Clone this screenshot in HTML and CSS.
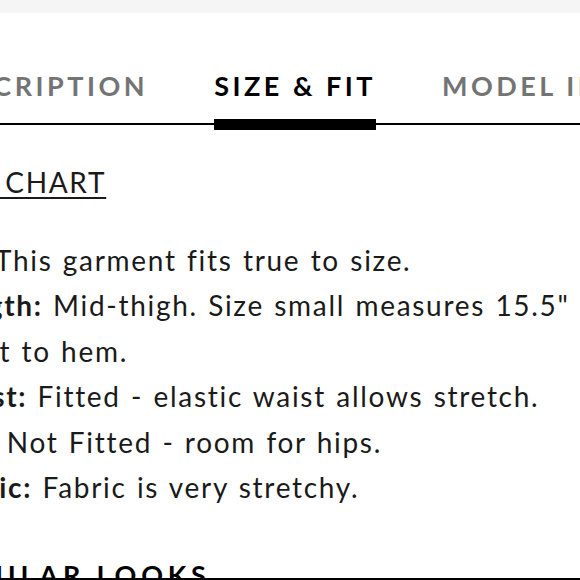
FILE: index.html
```html
<!DOCTYPE html>
<html lang="en">
<head>
<meta charset="utf-8">
<title>Size &amp; Fit</title>
<link rel="stylesheet" href="styles.css">
</head>
<body>
<div class="topbar"></div>
<nav class="tabs">
  <a class="tab">DESCRIPTION</a>
  <a class="tab active">SIZE &amp; FIT</a>
  <a class="tab">MODEL INFO</a>
</nav>
<section class="content">
  <a class="chart-link">SIZE CHART</a>
  <ul class="fit-list">
    <li><b>Fit:</b> This garment fits true to size.</li>
    <li><b>Length:</b> Mid-thigh. Size small measures 15.5" from waist to hem.</li>
    <li><b>Waist:</b> Fitted - elastic waist allows stretch.</li>
    <li><b>Hip:</b> Not Fitted - room for hips.</li>
    <li><b>Fabric:</b> Fabric is very stretchy.</li>
  </ul>
  <h2 class="similar">SIMILAR LOOKS</h2>
</section>
</body>
</html>
```
FILE: styles.css
```css
html, body {
  margin: 0;
  padding: 0;
  overflow: hidden;
  background: #fff;
}
body {
  font-family: Lato, "Liberation Sans", sans-serif;
  font-variant-ligatures: none;
  color: #1a1a1a;
  width: 580px;
  height: 580px;
}
.topbar {
  height: 13px;
  background: #f5f5f5;
}
.tabs {
  display: flex;
  align-items: flex-start;
  gap: 66px;
  padding-top: 58px;
  border-bottom: 2px solid #000;
  margin-left: -68px;
  width: 760px;
}
.tab {
  display: block;
  font-weight: 700;
  font-size: 27px;
  line-height: 30px;
  letter-spacing: 3.5px;
  color: #747474;
  padding-bottom: 18px;
  white-space: nowrap;
}
.tab.active {
  color: #000;
  border-bottom: 11px solid #000;
  margin-bottom: -7px;
}
.content {
  margin-left: -62px;
  width: 742px;
  padding-top: 35px;
  font-size: 28px;
  letter-spacing: 1.7px;
  word-spacing: 1.5px;
  line-height: 45.4px;
}
.chart-link {
  display: block;
  width: max-content;
  margin-left: -6px;
  text-decoration: underline;
  text-underline-offset: 4px;
  text-decoration-thickness: 1.5px;
  color: #1a1a1a;
}
.fit-list {
  list-style: none;
  margin: 32.6px 0 0;
  padding: 0;
}
.fit-list b {
  font-weight: 700;
}
.similar {
  margin: 50px 0 0;
  padding-left: 7px;
  font-size: 27px;
  line-height: 30px;
  font-weight: 700;
  letter-spacing: 4.8px;
  word-spacing: 0;
  color: #000;
  background: linear-gradient(#000, #000) no-repeat 0 18px / 100% 2px;
}
```
